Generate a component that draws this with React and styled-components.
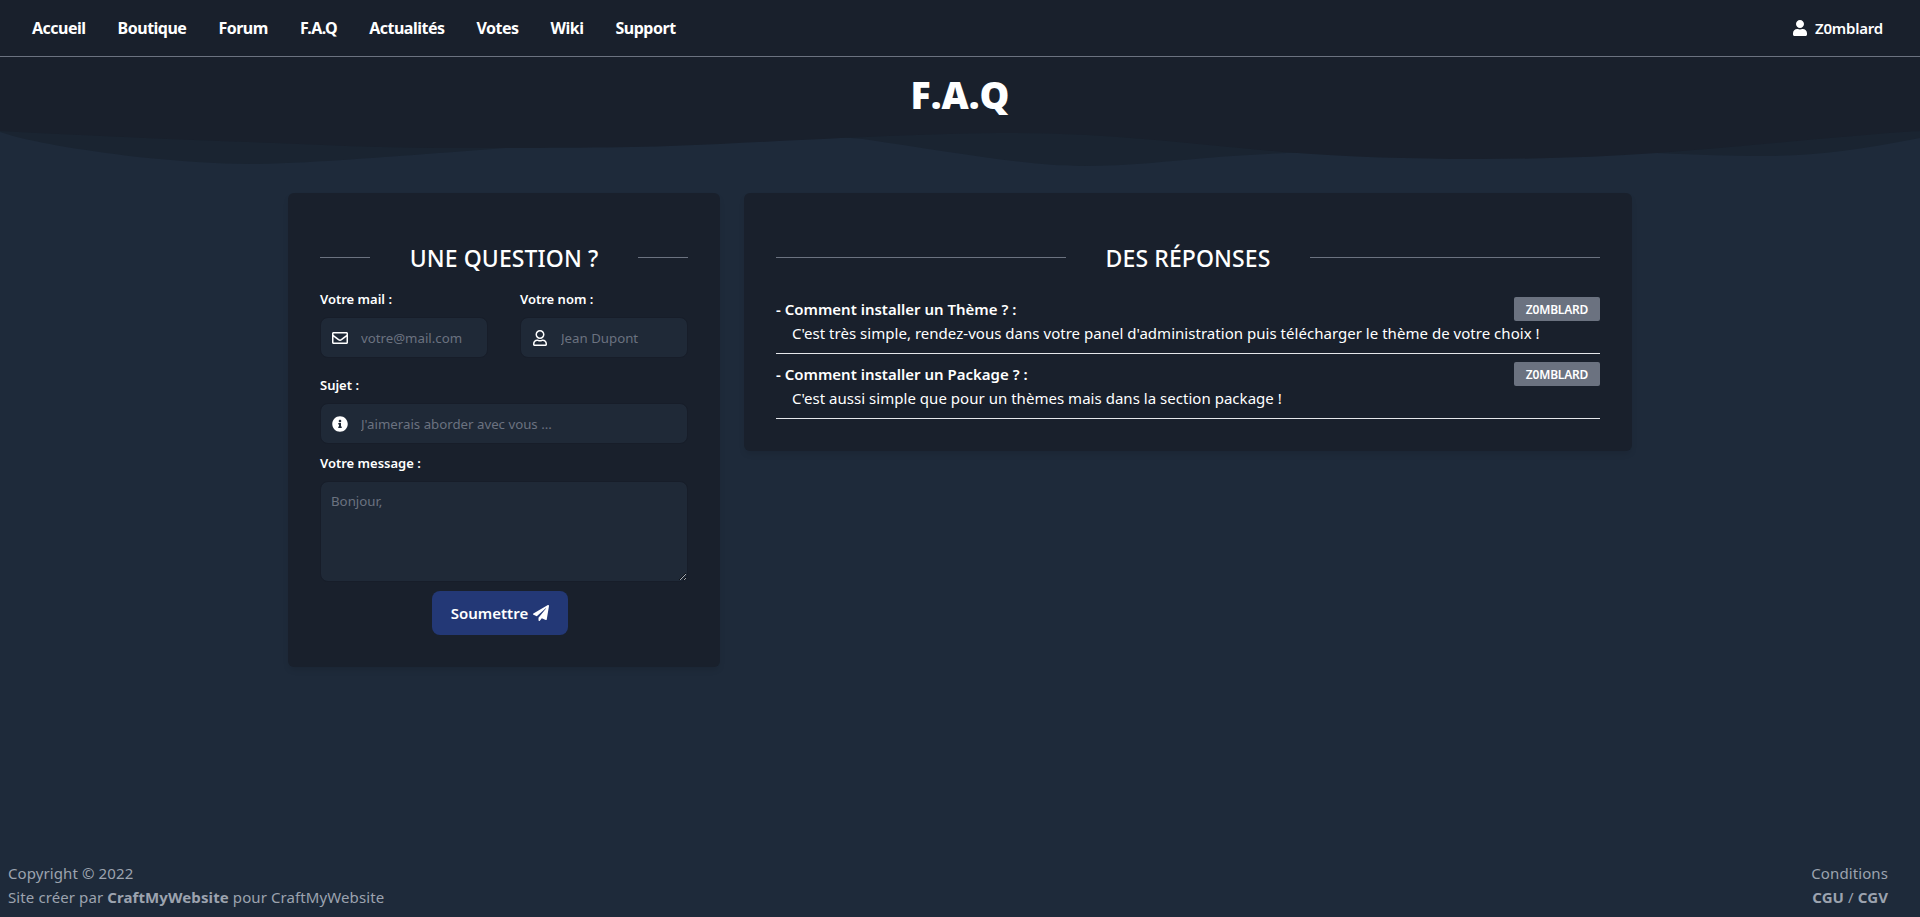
import React from 'react'
import styled, { createGlobalStyle } from 'styled-components'
import { FaInfoCircle, FaPaperPlane, FaRegEnvelope, FaRegUser, FaUser } from 'react-icons/fa'

const GlobalStyle = createGlobalStyle`
  * {
    box-sizing: border-box;
  }

  body {
    margin: 0;
    background: #1e2a3a;
    color: #fff;
    font-family: 'Noto Sans', 'Open Sans', sans-serif;
  }
`

const Page = styled.div`
  min-height: 917px;
  display: flex;
  flex-direction: column;
`

const Navbar = styled.nav`
  height: 57px;
  padding: 0 37px 0 32px;
  display: flex;
  align-items: center;
  justify-content: space-between;
  background: #19202c;
  border-bottom: 1px solid #6b7280;
`

const NavLinks = styled.div`
  display: flex;
  gap: 32px;
`

const NavLink = styled.a`
  color: #fff;
  font-size: 16px;
  font-weight: 700;
  letter-spacing: -0.5px;
  line-height: 24px;
`

const UserLink = styled(NavLink)`
  display: flex;
  align-items: center;
  gap: 7px;
  font-size: 15px;
  font-weight: 600;
  letter-spacing: -0.2px;
`

const Hero = styled.header`
  height: 68px;
  padding-top: 16px;
  background: #19202c;
  text-align: center;
`

const PageTitle = styled.h1`
  margin: 0;
  font-family: 'Open Sans', sans-serif;
  font-size: 37.5px;
  font-weight: 800;
  line-height: 44px;
`

const Wave = styled.svg`
  display: block;
  width: 100%;
  height: 45px;
`

const Main = styled.main`
  width: 1344px;
  margin: 23px auto 0;
  display: grid;
  grid-template-columns: repeat(3, 1fr);
  gap: 24px;
  align-items: start;
`

const Card = styled.section`
  grid-column: span ${(p) => p.$span || 1};
  padding: 48px 32px 32px;
  background: #19202c;
  border-radius: 6px;
  box-shadow: 0 4px 6px -1px rgba(0, 0, 0, 0.1);
`

const Heading = styled.div`
  height: 32px;
  margin-bottom: ${(p) => p.$gap}px;
  display: flex;
  align-items: center;

  &::before,
  &::after {
    content: '';
    flex: 1;
    height: 1px;
    background: #6b7280;
  }
`

const HeadingText = styled.h2`
  margin: 0 40px;
  padding-top: 2px;
  font-size: 23px;
  font-weight: 500;
  letter-spacing: 0.1px;
  line-height: 30px;
`

const TwoCols = styled.div`
  display: grid;
  grid-template-columns: 1fr 1fr;
  gap: 32px;
`

const Field = styled.div`
  margin-bottom: ${(p) => p.$after || 0}px;
`

const Label = styled.label`
  display: block;
  margin-bottom: 8px;
  font-size: 13px;
  font-weight: 600;
  line-height: 20px;
`

const InputWrap = styled.div`
  position: relative;
`

const IconSlot = styled.span`
  position: absolute;
  left: 12px;
  top: 0;
  height: 100%;
  display: flex;
  align-items: center;
  font-size: 16px;
`

const Input = styled.input`
  display: block;
  width: 100%;
  height: 41px;
  padding: 0 10px 0 40px;
  background: #1f2937;
  border: 1px solid #171d29;
  border-radius: 8px;
  color: #fff;
  font-family: inherit;
  font-size: 13.25px;

  &::placeholder {
    color: #6b7280;
    opacity: 1;
  }
`

const TextArea = styled.textarea`
  display: block;
  width: 100%;
  height: 101px;
  padding: 10px;
  background: #1f2937;
  border: 1px solid #171d29;
  border-radius: 8px;
  color: #fff;
  font-family: inherit;
  font-size: 13.25px;

  &::placeholder {
    color: #6b7280;
    opacity: 1;
  }
`

const Submit = styled.button`
  display: flex;
  align-items: center;
  gap: 5px;
  width: 136px;
  height: 44px;
  margin: 9px 0 0 112px;
  justify-content: center;
  background: #233876;
  border: 0;
  border-radius: 8px;
  color: #fff;
  font-family: inherit;
  font-size: 15px;
  font-weight: 600;
`

const Answer = styled.article`
  margin-bottom: ${(p) => p.$after}px;
  padding-bottom: 8px;
  border-bottom: 1px solid #e5e7eb;
`

const QuestionRow = styled.div`
  display: flex;
  align-items: center;
  justify-content: space-between;
  height: 24px;
`

const Question = styled.span`
  font-size: 15px;
  font-weight: 600;
`

const Badge = styled.span`
  width: 86px;
  height: 24px;
  display: flex;
  align-items: center;
  justify-content: center;
  background: #6b7280;
  border-radius: 2px;
  font-size: 12px;
  font-weight: 600;
  letter-spacing: -0.2px;
`

const Reply = styled.p`
  margin: 0 0 0 16px;
  font-size: 15px;
  letter-spacing: 0.03px;
  line-height: 24px;
`

const Footer = styled.footer`
  margin-top: auto;
  padding: 0 32px 8px 8px;
  display: flex;
  justify-content: space-between;
  color: #9ca3af;
  font-size: 15px;
  letter-spacing: 0.1px;
  line-height: 24px;
`

const FooterRight = styled.div`
  text-align: right;
`

const navItems = ['Accueil', 'Boutique', 'Forum', 'F.A.Q', 'Actualités', 'Votes', 'Wiki', 'Support']

const answers = [
  {
    question: '- Comment installer un Thème ? :',
    reply: "C'est très simple, rendez-vous dans votre panel d'administration puis télécharger le thème de votre choix !",
    after: 8,
  },
  {
    question: '- Comment installer un Package ? :',
    reply: "C'est aussi simple que pour un thèmes mais dans la section package !",
    after: 0,
  },
]

const App = () => {
  return (
    <Page>
      <GlobalStyle />
      <Navbar>
        <NavLinks>
          {navItems.map((item) => (
            <NavLink key={item}>{item}</NavLink>
          ))}
        </NavLinks>
        <UserLink>
          <FaUser size={16} />
          Z0mblard
        </UserLink>
      </Navbar>
      <Hero>
        <PageTitle>F.A.Q</PageTitle>
      </Hero>
      <Wave viewBox="0 125 1920 45" preserveAspectRatio="none">
        <path
          fill="#1a2431"
          d="M0 125 L0 132 C30 142 80 150 138 157 C180 161 215 164 252 164 C300 164 400 156 505 148 C620 140 780 130 863 139 C950 152 1030 166 1081 166 C1130 166 1170 161 1206 158 C1300 150 1500 145 1657 153 C1700 155 1730 156 1766 156 C1810 156 1860 150 1920 138 L1920 125 Z"
        />
        <path
          fill="#19202c"
          d="M0 125 L0 131 C90 136 190 140 275 143 C340 146 400 148 459 148 C560 148 640 148 720 144 C820 139 930 133 1011 133 C1110 133 1190 144 1283 152 C1350 157 1410 159 1478 159 C1540 159 1600 157 1657 153 C1750 146 1840 136 1920 131 L1920 125 Z"
        />
      </Wave>
      <Main>
        <Card>
          <Heading $gap={16}>
            <HeadingText>UNE QUESTION ?</HeadingText>
          </Heading>
          <TwoCols>
            <Field $after={17}>
              <Label>Votre mail :</Label>
              <InputWrap>
                <IconSlot>
                  <FaRegEnvelope />
                </IconSlot>
                <Input placeholder="votre@mail.com" />
              </InputWrap>
            </Field>
            <Field $after={17}>
              <Label>Votre nom :</Label>
              <InputWrap>
                <IconSlot>
                  <FaRegUser />
                </IconSlot>
                <Input placeholder="Jean Dupont" />
              </InputWrap>
            </Field>
          </TwoCols>
          <Field $after={9}>
            <Label>Sujet :</Label>
            <InputWrap>
              <IconSlot>
                <FaInfoCircle />
              </IconSlot>
              <Input placeholder="J'aimerais aborder avec vous ..." />
            </InputWrap>
          </Field>
          <Field>
            <Label>Votre message :</Label>
            <TextArea placeholder="Bonjour," />
          </Field>
          <Submit>
            Soumettre <FaPaperPlane size={16} />
          </Submit>
        </Card>
        <Card $span={2}>
          <Heading $gap={24}>
            <HeadingText>DES RÉPONSES</HeadingText>
          </Heading>
          {answers.map((a) => (
            <Answer key={a.question} $after={a.after}>
              <QuestionRow>
                <Question>{a.question}</Question>
                <Badge>Z0MBLARD</Badge>
              </QuestionRow>
              <Reply>{a.reply}</Reply>
            </Answer>
          ))}
        </Card>
      </Main>
      <Footer>
        <div>
          Copyright © 2022
          <br />
          Site créer par <b>CraftMyWebsite</b> pour CraftMyWebsite
        </div>
        <FooterRight>
          Conditions
          <br />
          <b>CGU</b> / <b>CGV</b>
        </FooterRight>
      </Footer>
    </Page>
  )
}

export default App
